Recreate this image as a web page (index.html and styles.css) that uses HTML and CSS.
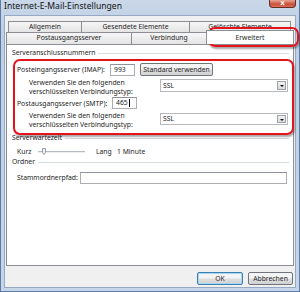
FILE: index.html
```html
<!doctype html>
<html lang="de">
<head>
    <meta charset="utf-8">
    <title>Internet-E-Mail-Einstellungen</title>
    <link rel="stylesheet" href="styles.css">
</head>
<body>

    <div class="window">
        <div class="titlebar">
            <span class="title">Internet-E-Mail-Einstellungen</span>
            <span class="close">x</span>
        </div>

        <div class="client">
            <div class="tabrow back">
                <span class="tab w-allg">Allgemein</span>
                <span class="tab w-ges">Gesendete Elemente</span>
                <span class="tab w-gel">Gelöschte Elemente</span>
            </div>
            <div class="tabrow front">
                <span class="tab w-post">Postausgangsserver</span>
                <span class="tab w-verb">Verbindung</span>
                <span class="tab w-erw current">Erweitert</span>
            </div>

            <div class="panel">
                <div class="legend">Serveranschlussnummern</div>

                <div class="row r-imap">
                    <span class="lbl w-imap">Posteingangsserver (IMAP):</span>
                    <span class="input w-port">993</span>
                    <span class="btn w-std">Standard verwenden</span>
                </div>
                <div class="row r-enc">
                    <span class="enc-text">Verwenden Sie den folgenden<br>verschlüsselten Verbindungstyp:</span>
                    <span class="select s1">SSL<i class="arrow"></i></span>
                </div>
                <div class="row r-smtp">
                    <span class="lbl w-smtp">Postausgangsserver (SMTP):</span>
                    <span class="input w-port">465<i class="caret"></i></span>
                </div>
                <div class="row r-enc2">
                    <span class="enc-text">Verwenden Sie den folgenden<br>verschlüsselten Verbindungstyp:</span>
                    <span class="select s2">SSL<i class="arrow"></i></span>
                </div>

                <div class="legend l-wait">Serverwartezeit</div>
                <div class="row r-time">
                    <span class="lbl w-kurz">Kurz</span>
                    <span class="slider">
                        <svg width="48" height="9" viewBox="0 0 48 9">
                            <line x1="0" y1="4.5" x2="47" y2="4.5" stroke="#b8bcc4" stroke-width="1"/>
                            <line x1="0" y1="5.5" x2="47" y2="5.5" stroke="#eceef2" stroke-width="1"/>
                            <path d="M4.5 1.5h3v4l-1.5 2l-1.5 -2z" fill="#f4f4f4" stroke="#7d8591" stroke-width="0.8"/>
                        </svg>
                    </span>
                    <span class="lbl w-lang">Lang</span>
                    <span class="lbl">1 Minute</span>
                </div>

                <div class="legend l-ord">Ordner</div>
                <div class="row r-root">
                    <span class="lbl w-root">Stammordnerpfad:</span>
                    <span class="input w-rootpath"></span>
                </div>
            </div>

            <div class="buttons">
                <span class="btn w-ok default">OK</span>
                <span class="btn w-cancel">Abbrechen</span>
            </div>
        </div>

        <!-- Markierungen -->
        <div class="mark mark-tab"></div>
        <div class="mark mark-ports"></div>
    </div>

</body>
</html>
```

FILE: styles.css
```css
html, body {
    margin: 0;
    padding: 0;
}

body {
    font-family: "Noto Sans", "Open Sans", sans-serif;
    font-size: 6.8px;
    color: #1e1e1e;
    background: #fff;
}

.window {
    position: relative;
    width: 300px;
    height: 292px;
    box-sizing: border-box;
    border: 1px solid #5c7ca8;
    border-top: 0;
    background: linear-gradient(#c9d7e8, #bfd0e4 30px, #c6d5e8);
    display: flex;
    flex-direction: column;
}

.titlebar {
    height: 15px;
    display: flex;
    align-items: flex-start;
    justify-content: space-between;
    padding-left: 3px;
}

.title {
    font-size: 8.6px;
    line-height: 12px;
    color: #111;
}

.close {
    width: 27px;
    height: 8px;
    margin-right: 3px;
    box-sizing: border-box;
    border: 1px solid #6b2a22;
    border-top: 0;
    border-radius: 0 0 4px 4px;
    background: linear-gradient(#e9a597, #c94e37 60%, #d8735c);
    color: #fff;
    font-family: "DejaVu Sans", sans-serif;
    font-weight: bold;
    font-size: 7px;
    line-height: 6px;
    text-align: center;
}

.client {
    flex: 1;
    margin: 0 3px 3px 3px;
    border: 1px solid #97a9c2;
    background: #f0f0f0;
    padding: 5px 0 0 1px;
    display: flex;
    flex-direction: column;
}

.tabrow {
    display: flex;
}

.tabrow.back {
    height: 11px;
    margin-left: 2px;
}

.tabrow.front {
    height: 12px;
}

.tab {
    flex-shrink: 0;
    box-sizing: border-box;
    border: 1px solid #8c8e94;
    border-bottom: 0;
    margin-right: -1px;
    background: linear-gradient(#f6f6f6, #e4e4e4);
    text-align: center;
    line-height: 10px;
    white-space: nowrap;
}

.tab.current {
    background: #fff;
    position: relative;
    height: 14px;
    margin-top: -2px;
    margin-bottom: -1px;
    z-index: 1;
    line-height: 13px;
}

.w-allg { width: 74px; }
.w-ges { width: 109px; }
.w-gel { width: 102px; }
.w-post { width: 126px; }
.w-verb { width: 76px; }
.w-erw { width: 88px; }

.panel {
    width: 288px;
    height: 222px;
    box-sizing: border-box;
    border: 1px solid #8c8e94;
    background: #fff;
    padding: 3px 4px 0 5px;
    display: flex;
    flex-direction: column;
}

.legend {
    height: 10px;
    line-height: 10px;
    display: flex;
    align-items: center;
    gap: 3px;
    white-space: nowrap;
}

.legend::after {
    content: "";
    flex: 1;
    border-top: 1px solid #d7dde3;
}

.row {
    display: flex;
    align-items: center;
    padding-left: 5px;
}

.row > * {
    flex-shrink: 0;
}

.lbl {
    white-space: nowrap;
}

.r-imap { margin-top: 5px; height: 13px; }
.r-enc { margin-top: 2px; height: 18px; align-items: flex-start; }
.r-smtp { margin-top: 1px; height: 12px; }
.r-enc2 { margin-top: 2px; height: 18px; align-items: flex-start; }
.l-wait { margin-top: 4px; }
.r-time { margin-top: 3px; height: 10px; }
.l-ord { margin-top: 1px; }
.r-root { margin-top: 4px; height: 13px; }

.w-imap { width: 93px; }
.w-smtp { width: 95px; }
.w-kurz { width: 21px; }
.w-lang { width: 21px; margin-left: 10px; }
.w-root { width: 63px; }

.input {
    box-sizing: border-box;
    height: 12px;
    border: 1px solid #abadb3;
    border-top-color: #8f939c;
    background: #fff;
    padding-left: 3px;
    line-height: 10px;
    display: flex;
    align-items: center;
}

.w-port { width: 25px; }
.w-rootpath { width: 207px; }

.caret {
    width: 1px;
    height: 8px;
    background: #000;
    margin-left: 1px;
}

.btn {
    box-sizing: border-box;
    height: 13px;
    border: 1px solid #70747c;
    border-radius: 2px;
    background: linear-gradient(#f4f4f4 45%, #dedede 55%, #d2d2d2);
    text-align: center;
    line-height: 11px;
    white-space: nowrap;
}

.w-std { width: 73px; margin-left: 5px; }

.enc-text {
    box-sizing: border-box;
    padding-left: 12px;
    width: 143px;
    line-height: 9px;
    white-space: nowrap;
}

.select {
    position: relative;
    box-sizing: border-box;
    width: 128px;
    height: 13px;
    border: 1px solid #b7b9bf;
    background: #fff;
    padding-left: 2px;
    line-height: 11px;
}

.s1 { margin-top: 1px; }
.s2 { margin-top: 2px; height: 12px; line-height: 10px; }

.arrow {
    position: absolute;
    right: 1px;
    top: 1px;
    bottom: 1px;
    width: 9px;
    box-sizing: border-box;
    border: 1px solid #9ea2aa;
    background: linear-gradient(#f2f2f2, #d9d9d9);
}

.arrow::after {
    content: "";
    position: absolute;
    left: 2px;
    top: 3px;
    border-left: 2px solid transparent;
    border-right: 2px solid transparent;
    border-top: 2px solid #111;
}

.slider {
    width: 48px;
    height: 9px;
    display: flex;
}

.buttons {
    display: flex;
    justify-content: flex-end;
    gap: 5px;
    margin-top: 6px;
    margin-right: 2px;
}

.w-ok { width: 46px; }
.w-cancel { width: 45px; }

.btn.default {
    border-color: #3c7fb1;
    box-shadow: inset 0 0 0 1px #a7d6f4;
}

.mark {
    position: absolute;
    border: 2px solid #e5141c;
    border-radius: 7px;
    box-shadow: 1px 2px 2px rgba(0, 0, 0, 0.35);
}

.mark-tab {
    left: 207px;
    top: 27px;
    width: 87px;
    height: 16px;
}

.mark-ports {
    left: 12px;
    top: 59px;
    width: 277px;
    height: 72px;
}
```
